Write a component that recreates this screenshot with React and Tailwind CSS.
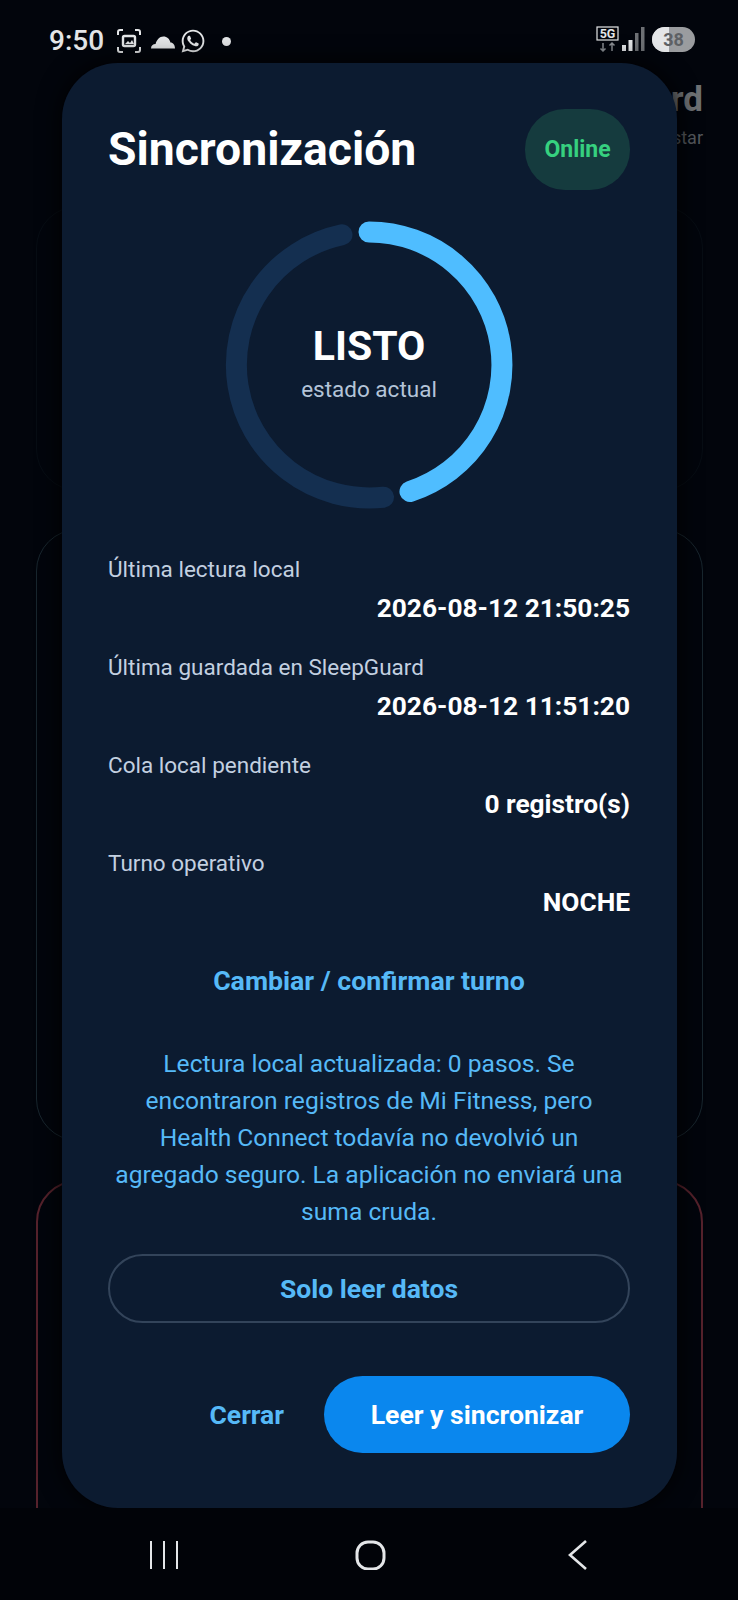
import React from "react";
import { FaWhatsapp } from "react-icons/fa";

const rows = [
  ["Última lectura local", "2026-08-12 21:50:25"],
  ["Última guardada en SleepGuard", "2026-08-12 11:51:20"],
  ["Cola local pendiente", "0 registro(s)"],
  ["Turno operativo", "NOCHE"],
];

const StatusBar = () => (
  <div className="h-[63px] flex items-start justify-between pl-[49px] pr-[43px] pt-[26px] text-[#e4e6e8]">
    <div className="flex items-center">
      <span className="text-[28px] leading-[30px] font-medium w-[58px]">9:50</span>
      <svg className="ml-[9px]" width="26" height="26" viewBox="0 0 26 26" fill="none" stroke="currentColor" strokeWidth="2">
        <path d="M2 7V4a2 2 0 0 1 2-2h3M19 2h3a2 2 0 0 1 2 2v3M24 19v3a2 2 0 0 1-2 2h-3M7 24H4a2 2 0 0 1-2-2v-3" />
        <rect x="7" y="8" width="12" height="10" rx="1.5" strokeWidth="2.4" />
        <path d="M9 16l3-3 2 2 2-3 2 4z" fill="currentColor" stroke="none" />
      </svg>
      <svg className="ml-[8px]" width="26" height="18" viewBox="0 0 26 18" fill="currentColor">
        <path d="M1 16.500c0-2.600 2-4.400 4.600-4.400C6.400 8 9.600 4.500 13.400 4.500c3.600 0 6.400 2.600 7 6 2.700 0 4.600 2.400 4.600 6H1z" />
      </svg>
      <FaWhatsapp className="ml-[4px]" size={26} />
      <span className="ml-[16px] w-[9px] h-[9px] rounded-full bg-[#e4e6e8]" />
    </div>
    <div className="flex items-center gap-[5px]">
      <svg className="-mr-[3px]" width="24" height="26" viewBox="0 0 24 26" fill="none">
        <rect x="2" y="1" width="21" height="13" fill="none" stroke="#e4e6e8" strokeWidth="1.200" />
        <text x="12.500" y="12" textAnchor="middle" fontSize="12.500" fontWeight="700" fill="#e4e6e8" fontFamily="Roboto, sans-serif">5G</text>
        <path d="M8 17v8M5.500 22.500L8 25l2.500-2.500M17 25v-8M14.500 19.500L17 17l2.500 2.500" stroke="#8b8f94" strokeWidth="1.500" />
      </svg>
      <svg width="24" height="26" viewBox="0 0 24 26">
        <rect x="1" y="19" width="4" height="6" fill="#e4e6e8" />
        <rect x="7.500" y="14" width="4" height="11" fill="#e4e6e8" />
        <rect x="14" y="7" width="3.500" height="18" fill="#6d7074" />
        <rect x="20" y="1" width="3.500" height="24" fill="#6d7074" />
      </svg>
      <div className="relative w-[43px] h-[25px] rounded-full overflow-hidden bg-[#9a9c9f] flex items-center justify-center ml-[2px]">
        <div className="absolute left-0 top-0 bottom-0 w-[17px] bg-[#e4e6e8]" />
        <span className="relative text-[18px] font-bold text-[#5d6064]">38</span>
      </div>
    </div>
  </div>
);

const BackgroundApp = () => (
  <div className="h-[1445px] overflow-hidden pl-[36px] pr-[35px]">
    <div className="h-[125px] pt-[20px] flex flex-col items-end">
      <span className="text-[35px] leading-[34px] font-bold text-[#6e7174]">rd</span>
      <span className="mt-[10px] text-[18px] leading-[22px] text-[#55595e]">star</span>
    </div>
    <div className="mt-[18px] h-[285px] rounded-[42px] border border-[#070d14]" />
    <div className="mt-[38px] h-[612px] rounded-[42px] border border-[#18262e]" />
    <div className="mt-[39px] h-[400px] rounded-[42px] border-2 border-[#56222c]" />
  </div>
);

const SyncRing = () => (
  <div className="relative w-[288px] h-[288px] mx-auto">
    <svg width="288" height="288" viewBox="0 0 288 288" fill="none" strokeWidth="21" strokeLinecap="round">
      <path d="M158.500 276.200 A133 133 0 0 1 117 13.800" stroke="#142f50" />
      <path d="M144 11 A133 133 0 0 1 185 270.500" stroke="#4fbdff" />
    </svg>
    <div className="absolute inset-0 flex flex-col items-center justify-center pb-[4px]">
      <span className="text-[41px] leading-[48px] font-bold text-white">LISTO</span>
      <span className="mt-[4px] text-[22.500px] leading-[30px] text-[#b4c4d8]">estado actual</span>
    </div>
  </div>
);

const SyncDialog = () => (
  <div className="absolute left-[62px] top-[63px] w-[615px] h-[1445px] rounded-[56px] bg-[#0c1b30] shadow-[0_0_24px_#000] pl-[46px] pr-[47px] flex flex-col">
    <div className="mt-[46px] h-[81px] flex items-center justify-between">
      <h2 className="text-[46.300px] font-bold leading-none text-white">Sincronización</h2>
      <span className="w-[105px] h-[81px] rounded-[40px] bg-[#153b3e] flex items-center justify-center pt-[2px] text-[23px] font-bold text-[#36d17f]">Online</span>
    </div>
    <div className="mt-[31px]">
      <SyncRing />
    </div>
    <div className="mt-[45px] flex flex-col gap-[29px]">
      {rows.map(([label, value]) => (
        <div key={label}>
          <div className="text-[22.500px] leading-[30px] text-[#c3d0e0]">{label}</div>
          <div className="mt-[9px] text-right text-[26.300px] leading-[30px] font-bold text-white">{value}</div>
        </div>
      ))}
    </div>
    <button className="mt-[44px] h-[36px] text-[26.700px] font-bold text-[#56b9f7]">Cambiar / confirmar turno</button>
    <p className="mt-[48px] px-[3px] text-center text-[24.600px] leading-[37px] text-[#56b9f7]">
      Lectura local actualizada: 0 pasos. Se encontraron registros de Mi Fitness, pero Health Connect todavía no devolvió un agregado seguro. La aplicación no enviará una suma cruda.
    </p>
    <button className="mt-[24px] h-[69px] rounded-full border-2 border-[#33445a] text-[26.500px] font-bold text-[#56b9f7]">Solo leer datos</button>
    <div className="mt-[53px] flex items-center justify-end">
      <button className="text-[26.500px] font-bold text-[#56b9f7]">Cerrar</button>
      <button className="ml-[40px] w-[306px] h-[77px] rounded-full bg-[#0a87ee] text-[26.600px] font-bold text-white">Leer y sincronizar</button>
    </div>
  </div>
);

const NavBar = () => (
  <div className="relative h-[92px] bg-[#010308] flex items-start justify-between pt-[32px] pl-[149px] pr-[149px]">
    <svg width="30" height="30" viewBox="0 0 30 30" stroke="#e4e6e8" strokeWidth="2" fill="none">
      <path d="M2 1v28M15 1v28M28 1v28" />
    </svg>
    <svg className="mr-[4px]" width="32" height="30" viewBox="0 0 32 30" stroke="#e4e6e8" strokeWidth="3" fill="none">
      <rect x="2" y="2" width="27" height="27" rx="11" />
    </svg>
    <svg width="22" height="30" viewBox="0 0 22 30" stroke="#e4e6e8" strokeWidth="2.600" fill="none">
      <path d="M19 1L3 15l16 14" />
    </svg>
  </div>
);

export default function App() {
  return (
    <div className="relative w-[738px] h-[1600px] overflow-hidden bg-[#02050c] font-['Roboto',sans-serif]">
      <StatusBar />
      <BackgroundApp />
      <SyncDialog />
      <NavBar />
    </div>
  );
}
